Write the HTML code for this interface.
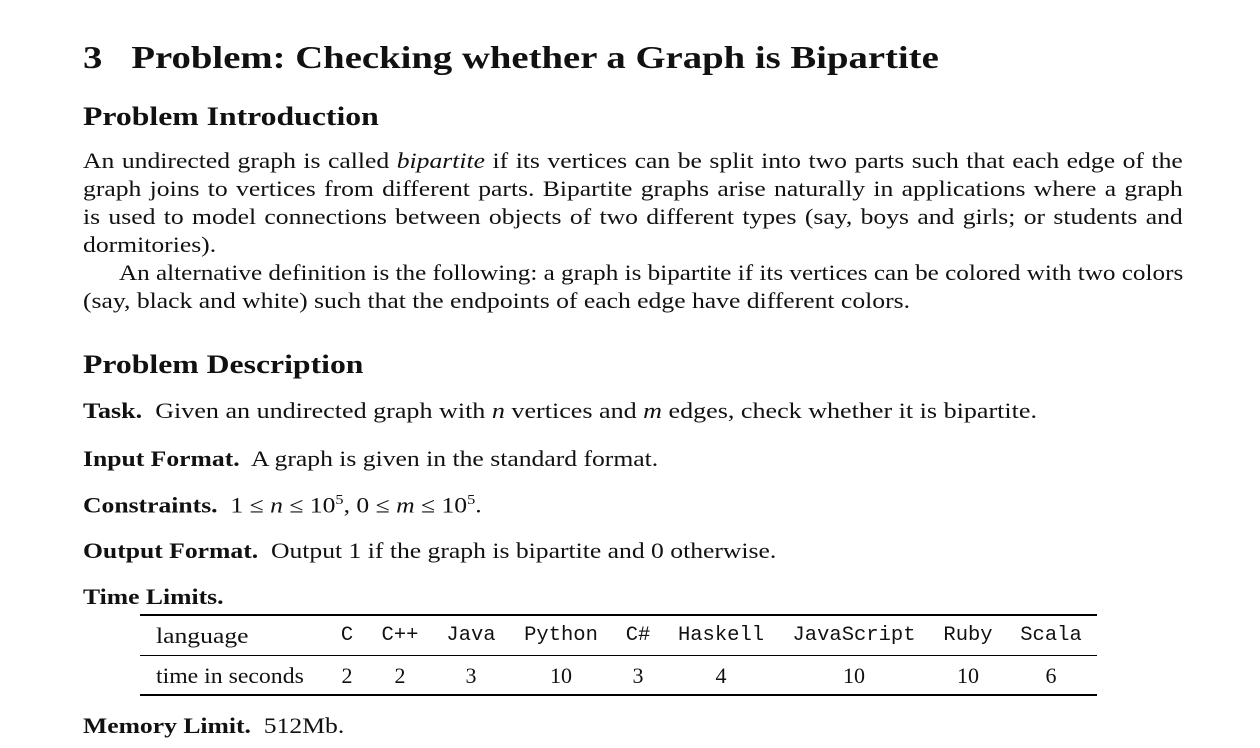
<!DOCTYPE html>
<html><head><meta charset="utf-8"><style>
body{margin:0;width:1260px;height:748px;background:#fff;position:relative;overflow:hidden;font-family:"Liberation Serif",serif;color:#111}
.l{position:absolute;white-space:nowrap;line-height:1;transform-origin:0 0;transform:scaleX(1.165);font-size:22px}
.p{position:absolute;left:83px;width:944px;font-size:22px;line-height:1;text-align:justify;text-align-last:justify;white-space:nowrap;transform-origin:0 0;transform:scaleX(1.165)}
.b{font-weight:bold}
.rule{position:absolute;left:140px;width:957px;background:#000}
.c{position:absolute;font-size:22px;line-height:1;transform:translateX(-50%);white-space:nowrap}
.c.m{font-family:"Liberation Mono",monospace;font-size:20.5px}
</style></head><body>
<div class="l b" style="left:83px;top:41px;font-size:32px;transform:scaleX(1.21)">3&nbsp;&nbsp;&nbsp;Problem: Checking whether a Graph is Bipartite</div>
<div class="l b" style="left:83px;top:104px;font-size:26px;transform:scaleX(1.22)">Problem Introduction</div>
<div class="p" style="top:150px">An undirected graph is called <i>bipartite</i> if its vertices can be split into two parts such that each edge of the</div>
<div class="p" style="top:178px">graph joins to vertices from different parts. Bipartite graphs arise naturally in applications where a graph</div>
<div class="p" style="top:206px">is used to model connections between objects of two different types (say, boys and girls; or students and</div>
<div class="l" style="left:83px;top:234px">dormitories).</div>
<div class="p" style="top:262px;left:119px;width:931px;transform:scaleX(1.143)">An alternative definition is the following: a graph is bipartite if its vertices can be colored with two colors</div>
<div class="l" style="left:83px;top:290px">(say, black and white) such that the endpoints of each edge have different colors.</div>
<div class="l b" style="left:83px;top:352px;font-size:26px;transform:scaleX(1.22)">Problem Description</div>
<div class="l" style="left:83px;top:400px;transform:scaleX(1.185)"><b>Task.</b>&nbsp; Given an undirected graph with <i>n</i> vertices and <i>m</i> edges, check whether it is bipartite.</div>
<div class="l" style="left:83px;top:448px"><b>Input Format.</b>&nbsp; A graph is given in the standard format.</div>
<div class="l" style="left:83px;top:494px"><b>Constraints.</b>&nbsp; 1 ≤ <i>n</i> ≤ 10<sup style="font-size:14px">5</sup>, 0 ≤ <i>m</i> ≤ 10<sup style="font-size:14px">5</sup>.</div>
<div class="l" style="left:83px;top:540px"><b>Output Format.</b>&nbsp; Output 1 if the graph is bipartite and 0 otherwise.</div>
<div class="l b" style="left:83px;top:586px">Time Limits.</div>
<div class="rule" style="top:614px;height:2px"></div>
<div class="rule" style="top:655px;height:1px"></div>
<div class="rule" style="top:694px;height:2px"></div>
<div class="l" style="left:156px;top:625px">language</div>
<div class="c m" style="left:347px;top:626px">C</div>
<div class="c m" style="left:400px;top:626px">C++</div>
<div class="c m" style="left:471px;top:626px">Java</div>
<div class="c m" style="left:561px;top:626px">Python</div>
<div class="c m" style="left:638px;top:626px">C#</div>
<div class="c m" style="left:721px;top:626px">Haskell</div>
<div class="c m" style="left:854px;top:626px">JavaScript</div>
<div class="c m" style="left:968px;top:626px">Ruby</div>
<div class="c m" style="left:1051px;top:626px">Scala</div>
<div class="l" style="left:156px;top:665px;transform:scaleX(1.08)">time in seconds</div>
<div class="c" style="left:347px;top:665px">2</div>
<div class="c" style="left:400px;top:665px">2</div>
<div class="c" style="left:471px;top:665px">3</div>
<div class="c" style="left:561px;top:665px">10</div>
<div class="c" style="left:638px;top:665px">3</div>
<div class="c" style="left:721px;top:665px">4</div>
<div class="c" style="left:854px;top:665px">10</div>
<div class="c" style="left:968px;top:665px">10</div>
<div class="c" style="left:1051px;top:665px">6</div>
<div class="l" style="left:83px;top:715px"><b>Memory Limit.</b>&nbsp; 512Mb.</div>
</body></html>
